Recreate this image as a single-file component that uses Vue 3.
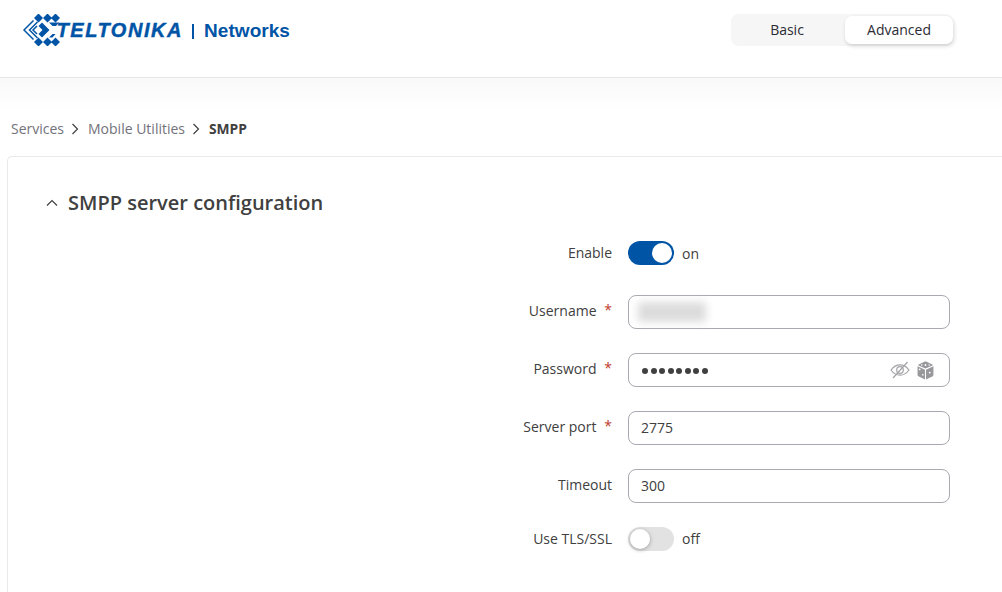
<script setup>
const rows = [
  { label: 'Username', required: true, kind: 'blur' },
  { label: 'Password', required: true, kind: 'password' },
  { label: 'Server port', required: true, kind: 'text', value: '2775' },
  { label: 'Timeout', required: false, kind: 'text', value: '300' },
]
</script>

<template>
  <div class="page">
    <header class="header">
      <div class="logo">
        <svg class="mark" width="40" height="32" viewBox="0 0 40 32">
          <g fill="#0054a6">
            <path d="M15.500-.5l4.500 4.500-4.500 4.500L11 4zM24.500-.5L29 4l-4.500 4.500L20 4zM32.500-.5L37 4l-4.500 4.500L28 4zM15.500 23.500L20 28l-4.500 4.500L11 28zM24.500 23.500L29 28l-4.500 4.500L20 28zM32.500 23.500L37 28l-4.500 4.500L28 28z"/>
            <path d="M26 8.500h10l-3 3.500h-3.500zM26 23.500l3.500-3.500h3l-3 3.500z"/>
            <path d="M19 8.500l7.500 7.500-7.500 7.500-3.500-3.500 4-4-4-4z"/>
          </g>
          <g fill="none" stroke="#0054a6" stroke-width="1.500">
            <path d="M10.500 6.500L1 16l9.500 9.500"/>
            <path d="M14.500 8L6.500 16l8 8"/>
            <path d="M14 12L10 16l4 4"/>
          </g>
        </svg>
        <span class="brand">TELTONIKA</span>
        <span class="sep"></span>
        <span class="networks">Networks</span>
      </div>
      <div class="mode">
        <button class="mode-btn">Basic</button>
        <button class="mode-btn active">Advanced</button>
      </div>
    </header>

    <nav class="crumbs">
      <span>Services</span>
      <svg class="chev" width="9" height="12" viewBox="0 0 9 12"><path d="M1.500 1l5 5-5 5" /></svg>
      <span>Mobile Utilities</span>
      <svg class="chev" width="9" height="12" viewBox="0 0 9 12"><path d="M1.500 1l5 5-5 5" /></svg>
      <strong>SMPP</strong>
    </nav>

    <section class="card">
      <h2 class="title">
        <svg class="caret" width="12" height="8" viewBox="0 0 12 8"><path d="M1 6.500L6 1.500l5 5" /></svg>
        SMPP server configuration
      </h2>

      <div class="form">
        <div class="row toggle-row">
          <label class="label">Enable</label>
          <div class="switch on"><span class="knob"></span></div>
          <span class="state">on</span>
        </div>

        <div v-for="row in rows" :key="row.label" class="row">
          <label class="label">{{ row.label }}<span v-if="row.required" class="req">*</span></label>
          <div class="input">
            <span v-if="row.kind === 'blur'" class="blurred"></span>
            <span v-else-if="row.kind === 'password'" class="dots">
              <i v-for="n in 8" :key="n"></i>
            </span>
            <span v-else class="value">{{ row.value }}</span>
            <span v-if="row.kind === 'password'" class="icons">
              <svg width="20" height="18" viewBox="0 0 20 18" fill="none" stroke="#a3a3a8" stroke-width="1.200">
                <path d="M1 9c2.500-3.500 5.500-5.200 9-5.200s6.500 1.700 9 5.200c-2.500 3.500-5.500 5.200-9 5.200S3.500 12.500 1 9z"/>
                <circle cx="10" cy="9" r="3.300"/>
                <path d="M17.500 1L3 17"/>
              </svg>
              <svg width="17" height="19" viewBox="0 0 16 18">
                <path fill="#97979c" d="M8 .5c.5 0 1 .1 1.500.4l5 2.400c.5.2.5.7 0 1L8 7.100 1.500 4.300c-.5-.3-.5-.8 0-1l5-2.400C7 .6 7.500.5 8 .5z"/>
                <path fill="#97979c" d="M.5 5l7 3.200v9.300l-6.200-3c-.5-.3-.8-.7-.8-1.200z"/>
                <path fill="#97979c" d="M15.500 5l-7 3.200v9.300l6.200-3c.5-.3.8-.7.8-1.200z"/>
                <g fill="#fff">
                  <circle cx="8" cy="3.800" r=".9"/>
                  <circle cx="4.500" cy="3.800" r=".7"/>
                  <circle cx="11.500" cy="3.800" r=".7"/>
                  <circle cx="2.500" cy="8" r=".8"/>
                  <circle cx="5.500" cy="13" r=".8"/>
                  <circle cx="12" cy="11" r=".9"/>
                </g>
              </svg>
            </span>
          </div>
        </div>

        <div class="row toggle-row last">
          <label class="label">Use TLS/SSL</label>
          <div class="switch"><span class="knob"></span></div>
          <span class="state off">off</span>
        </div>
      </div>
    </section>
  </div>
</template>

<style>
html, body { margin: 0; background: #fff; }
</style>

<style scoped>
.page {
  width: 1002px;
  height: 592px;
  overflow: hidden;
  font-family: "Open Sans", sans-serif;
  font-size: 14px;
  color: #404040;
  background: linear-gradient(#f9f9f9 0, #fff 32px) 0 78px no-repeat #fff;
}
.header {
  height: 77px;
  background: #fff;
  border-bottom: 1px solid #e6e6e6;
  display: flex;
  align-items: flex-start;
  justify-content: space-between;
  padding-right: 48px;
}
.logo {
  display: flex;
  align-items: center;
  margin: 14px 0 0 23px;
  height: 32px;
}
.mark { display: block; flex: none; }
.brand {
  font-family: "Liberation Sans", sans-serif;
  font-weight: 700;
  font-style: italic;
  font-size: 20px;
  letter-spacing: 1.550px;
  -webkit-text-stroke: 0.4px #0054a6;
  color: #0054a6;
  margin-left: -6.500px;
}
.sep {
  width: 1.500px;
  height: 15px;
  background: #0054a6;
  margin: 2px 10.500px 0 9px;
}
.networks {
  font-family: "Liberation Sans", sans-serif;
  font-weight: 700;
  font-size: 19px;
  letter-spacing: 0.05px;
  margin-top: 2px;
  color: #0054a6;
}
.mode {
  margin-top: 14px;
  margin-right: 1px;
  width: 222px;
  height: 32px;
  background: #f6f6f6;
  border-radius: 8px;
  display: flex;
  justify-content: flex-end;
}
.mode-btn {
  width: 110px;
  height: 28px;
  margin-top: 2px;
  border: 0;
  padding: 0 6px 2px 0;
  background: transparent;
  border-radius: 7px;
  font: inherit;
  color: #2b2b33;
}
.mode-btn.active {
  width: 108px;
  padding: 0 0 2px 0;
  background: #fff;
  box-shadow: 1px 2px 4px rgba(0, 0, 0, 0.16);
}
.crumbs {
  display: flex;
  align-items: center;
  height: 20px;
  margin: 40px 0 0 11px;
  color: #72727a;
}
.crumbs strong { color: #404040; font-weight: 700; font-size: 13.800px; }
.chev { margin: 1px 7.800px 0 7.200px; }
.chev path { fill: none; stroke: #404040; stroke-width: 1.200; }
.card {
  margin: 18px 0 0 7px;
  height: 440px;
  border-top: 1px solid #e9e9e9;
  border-left: 1px solid #e9e9e9;
  border-top-left-radius: 5px;
  background: #fff;
}
.title {
  margin: 32px 0 0 38px;
  height: 28px;
  display: flex;
  align-items: center;
  gap: 10px;
  font-size: 20px;
  font-weight: 600;
  line-height: 28px;
  color: #404040;
}
.caret path { fill: none; stroke: #404040; stroke-width: 1.200; }
.form {
  margin-top: 24px;
  display: flex;
  flex-direction: column;
  gap: 24px;
}
.row {
  display: flex;
  align-items: center;
  height: 34px;
}
.toggle-row { height: 24px; margin-bottom: 6px; }
.label {
  width: 604px;
  text-align: right;
  margin-right: 16px;
  flex: none;
  line-height: 20px;
  margin-top: -3px;
  position: relative;
  color: #404040;
}
.toggle-row .label { margin-top: 0; }
.req {
  color: #c0392b;
  position: absolute;
  right: 0;
  top: -1px;
  font-size: 14px;
}
.row:not(.toggle-row) .label { padding-right: 15.500px; box-sizing: border-box; }
.row:not(.toggle-row) .label:not(:has(.req)) { padding-right: 0; }
.input {
  width: 322px;
  height: 34px;
  box-sizing: border-box;
  border: 1px solid #a9a9b0;
  border-radius: 8px;
  padding: 0 8px 0 12px;
  display: flex;
  align-items: center;
  justify-content: space-between;
  color: #404040;
}
.value { margin-top: -2px; }
.blurred {
  display: block;
  width: 68px;
  height: 20px;
  margin-left: -3px;
  background: #dcdcdc;
  filter: blur(4px);
}
.dots { display: flex; gap: 2.500px; margin: 2px 0 0 1px; }
.dots i {
  display: block;
  width: 6px;
  height: 6px;
  border-radius: 50%;
  background: #404040;
}
.icons { display: flex; align-items: center; gap: 7px; margin-right: 7px; }
.icons svg { display: block; }
.switch {
  width: 46px;
  height: 24px;
  border-radius: 12px;
  background: #e2e2e2;
  position: relative;
  flex: none;
}
.switch.on { background: #0054a6; }
.knob {
  position: absolute;
  top: 2px;
  left: 2px;
  width: 20px;
  height: 20px;
  border-radius: 50%;
  background: #fff;
  box-shadow: 0 1px 4px rgba(0, 0, 0, 0.3);
}
.switch.on .knob { left: 24px; box-shadow: none; }
.state { margin-left: 8px; color: #404040; }
.state.off { margin-top: -2px; }
</style>
